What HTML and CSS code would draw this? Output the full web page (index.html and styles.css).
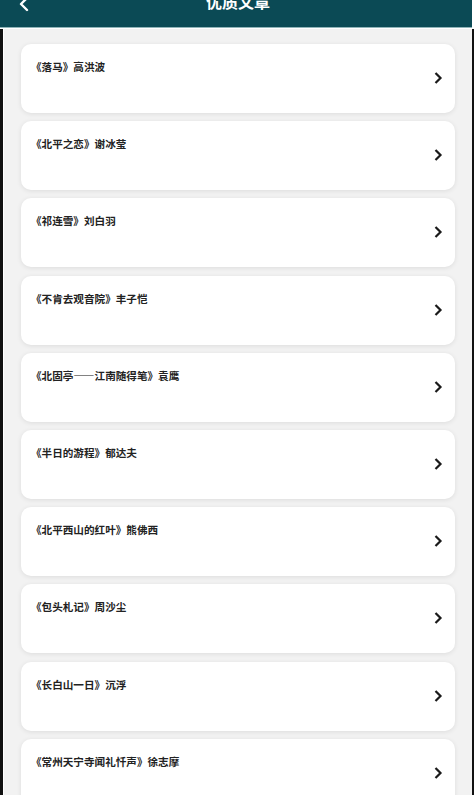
FILE: index.html
```html
<!DOCTYPE html>
<html lang="zh">
<head>
<meta charset="utf-8">
<title>优质文章</title>
<link rel="stylesheet" href="styles.css">
</head>
<body>
<div class="page">
  <header class="topbar">
    <svg class="back" width="12" height="16" viewBox="0 0 12 16"><path d="M9 -2 L3 4 L9 10" fill="none" stroke="#fff" stroke-width="2.4" stroke-linecap="round" stroke-linejoin="round"/></svg>
    <div class="title">优质文章</div>
  </header>
  <div class="frame">
    <div class="lborder"></div>
    <main class="list">
      <div class="card"><span class="name">《落马》高洪波</span><svg class="chev" viewBox="0 0 10 14"><path d="M2.5 2 L7.5 7 L2.5 12" fill="none" stroke="#1a1a1a" stroke-width="2.2"/></svg></div>
      <div class="card"><span class="name">《北平之恋》谢冰莹</span><svg class="chev" viewBox="0 0 10 14"><path d="M2.5 2 L7.5 7 L2.5 12" fill="none" stroke="#1a1a1a" stroke-width="2.2"/></svg></div>
      <div class="card"><span class="name">《祁连雪》刘白羽</span><svg class="chev" viewBox="0 0 10 14"><path d="M2.5 2 L7.5 7 L2.5 12" fill="none" stroke="#1a1a1a" stroke-width="2.2"/></svg></div>
      <div class="card"><span class="name">《不肯去观音院》丰子恺</span><svg class="chev" viewBox="0 0 10 14"><path d="M2.5 2 L7.5 7 L2.5 12" fill="none" stroke="#1a1a1a" stroke-width="2.2"/></svg></div>
      <div class="card"><span class="name">《北固亭——江南随得笔》袁鹰</span><svg class="chev" viewBox="0 0 10 14"><path d="M2.5 2 L7.5 7 L2.5 12" fill="none" stroke="#1a1a1a" stroke-width="2.2"/></svg></div>
      <div class="card"><span class="name">《半日的游程》郁达夫</span><svg class="chev" viewBox="0 0 10 14"><path d="M2.5 2 L7.5 7 L2.5 12" fill="none" stroke="#1a1a1a" stroke-width="2.2"/></svg></div>
      <div class="card"><span class="name">《北平西山的红叶》熊佛西</span><svg class="chev" viewBox="0 0 10 14"><path d="M2.5 2 L7.5 7 L2.5 12" fill="none" stroke="#1a1a1a" stroke-width="2.2"/></svg></div>
      <div class="card"><span class="name">《包头札记》周沙尘</span><svg class="chev" viewBox="0 0 10 14"><path d="M2.5 2 L7.5 7 L2.5 12" fill="none" stroke="#1a1a1a" stroke-width="2.2"/></svg></div>
      <div class="card"><span class="name">《长白山一日》沉浮</span><svg class="chev" viewBox="0 0 10 14"><path d="M2.5 2 L7.5 7 L2.5 12" fill="none" stroke="#1a1a1a" stroke-width="2.2"/></svg></div>
      <div class="card"><span class="name">《常州天宁寺闻礼忏声》徐志摩</span><svg class="chev" viewBox="0 0 10 14"><path d="M2.5 2 L7.5 7 L2.5 12" fill="none" stroke="#1a1a1a" stroke-width="2.2"/></svg></div>
    </main>
    <div class="rborder"></div>
  </div>
</div>
</body>
</html>
```

FILE: styles.css
```css
html, body {
  margin: 0;
  padding: 0;
  background: #ffffff;
  height: 795px;
  overflow: hidden;
}
body {
  font-family: "Noto Sans CJK SC", "Noto Sans", sans-serif;
}
.page {
  width: 475px;
  height: 795px;
  display: flex;
  flex-direction: column;
}
.topbar {
  position: relative;
  width: 472px;
  height: 27px;
  background: #0b4a55;
  border-bottom: 1px solid #8fb4b8;
  flex: none;
}
.back {
  position: absolute;
  left: 18px;
  top: 0;
}
.title {
  text-align: center;
  color: #ffffff;
  font-size: 16px;
  font-weight: 700;
  line-height: 16px;
  margin-top: -7px;
  padding-left: 4px;
}
.frame {
  flex: 1;
  display: flex;
  min-height: 0;
  border-top: 1px solid #ffffff;
}
.lborder {
  width: 3px;
  background: #111;
  border-right: 1px solid #fff;
  flex: none;
}
.rborder {
  width: 2px;
  background: #111;
  margin-right: 1px;
  flex: none;
}
.list {
  flex: 1;
  background: #f2f2f2;
  padding: 15px 17px 0 17px;
  display: flex;
  flex-direction: column;
  gap: 8.2px;
  overflow: hidden;
}
.card {
  flex: none;
  height: 69px;
  background: #ffffff;
  border-radius: 10px;
  box-shadow: 0 1px 5px rgba(0, 0, 0, 0.09);
  display: flex;
  justify-content: space-between;
  align-items: flex-start;
  padding: 15px 12px 0 10px;
  box-sizing: border-box;
  position: relative;
}
.name {
  font-size: 10.6px;
  font-weight: 700;
  color: #222;
  line-height: 15px;
}
.chev {
  width: 10px;
  height: 14px;
  margin-top: 12px;
}
```
